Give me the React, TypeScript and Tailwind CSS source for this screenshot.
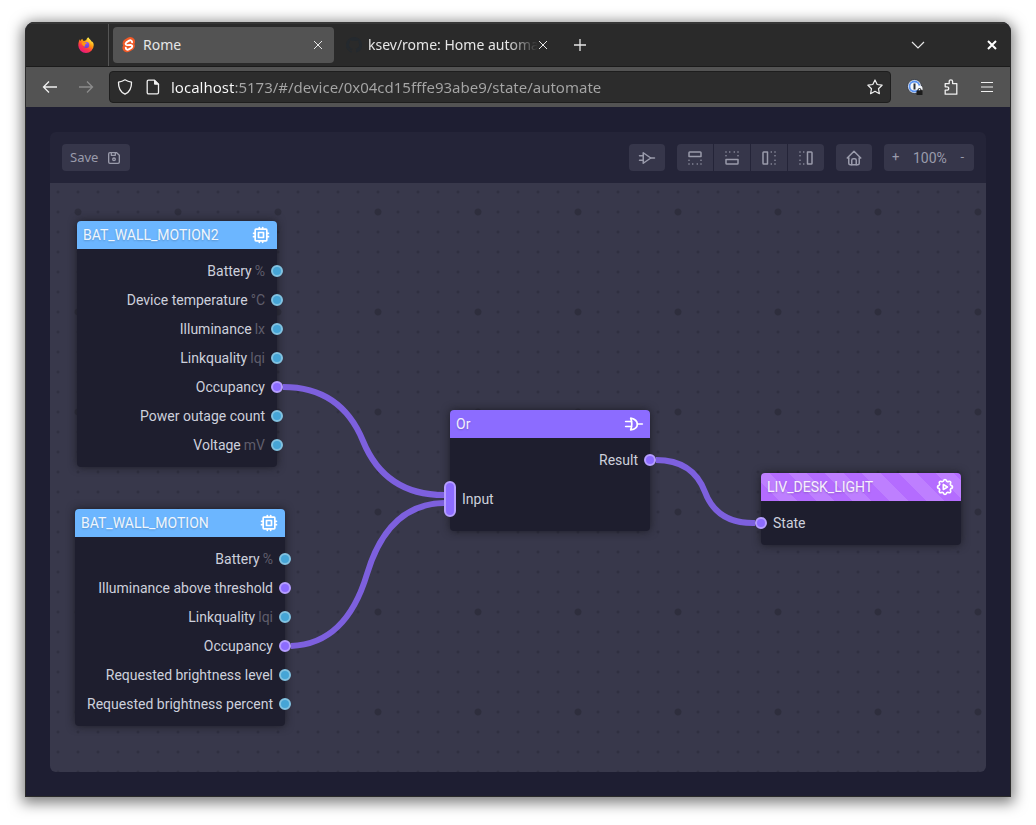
import type { ReactNode } from "react";
import {
  TbBoxAlignBottom,
  TbBoxAlignLeft,
  TbBoxAlignRight,
  TbBoxAlignTop,
  TbCpu,
  TbDeviceFloppy,
  TbHome,
  TbLogicBuffer,
  TbLogicOr,
  TbSettingsAutomation,
} from "react-icons/tb";

type PortKind = "value" | "flag";

interface Port {
  label: string;
  unit?: string;
  kind: PortKind;
  side: "in" | "out";
  multi?: boolean;
}

interface NodeProps {
  title: string;
  icon: ReactNode;
  place: string;
  header: string;
  ports: Port[];
}

const out = (label: string, kind: PortKind, unit?: string): Port => ({ label, kind, unit, side: "out" });

const motion2: Port[] = [
  out("Battery", "value", "%"),
  out("Device temperature", "value", "°C"),
  out("Illuminance", "value", "lx"),
  out("Linkquality", "value", "lqi"),
  out("Occupancy", "flag"),
  out("Power outage count", "value"),
  out("Voltage", "value", "mV"),
];

const motion: Port[] = [
  out("Battery", "value", "%"),
  out("Illuminance above threshold", "flag"),
  out("Linkquality", "value", "lqi"),
  out("Occupancy", "flag"),
  out("Requested brightness level", "value"),
  out("Requested brightness percent", "value"),
];

const orPorts: Port[] = [
  out("Result", "flag"),
  { label: "Input", kind: "flag", side: "in", multi: true },
];

const lightPorts: Port[] = [{ label: "State", kind: "flag", side: "in" }];

function Handle({ port }: { port: Port }) {
  const color =
    port.kind === "flag" ? "bg-[#8c6cff] border-[#b59eff]" : "bg-[#46a5d6] border-[#82c2e0]";
  const side = port.side === "out" ? "-right-[6px]" : "-left-[6px]";
  const height = port.multi ? "h-9" : "h-3";
  return (
    <button
      aria-label={port.label}
      className={`absolute top-1/2 w-3 -translate-y-1/2 rounded-full border-2 ${height} ${side} ${color}`}
    />
  );
}

function GraphNode({ title, icon, place, header, ports }: NodeProps) {
  return (
    <section className={`absolute rounded bg-[#1e1e2e] shadow-[0_0_8px_rgba(20,20,25,0.75)] ${place}`}>
      <header
        className={`flex h-7 items-center justify-between rounded-t px-1.5 text-sm text-white/90 ${header}`}
      >
        <h2 className="text-shadow-[0_1px_2px_rgba(0,0,0,0.2)]">{title}</h2>
        <span className="text-xl text-white">{icon}</span>
      </header>
      <ul className="flex flex-col gap-px py-2 text-sm text-[#cdd0dc]">
        {ports.map((port) => (
          <li
            key={port.label}
            className={`relative flex items-center gap-[3px] px-3 ${port.multi ? "h-12" : "h-7"} ${
              port.side === "out" ? "justify-end" : "justify-start"
            }`}
          >
            <span>{port.label}</span>
            {port.unit && <span className="text-[#5f5d6b]">{port.unit}</span>}
            <Handle port={port} />
          </li>
        ))}
      </ul>
    </section>
  );
}

function FirefoxLogo() {
  return (
    <svg viewBox="0 0 16 16" className="size-4">
      <defs>
        <linearGradient id="fx" x1="0.8" y1="0.1" x2="0.25" y2="1">
          <stop offset="0" stopColor="#fff44f" />
          <stop offset="0.35" stopColor="#ff980e" />
          <stop offset="0.65" stopColor="#ff3647" />
          <stop offset="1" stopColor="#e31587" />
        </linearGradient>
        <linearGradient id="fy" x1="0" y1="0" x2="0" y2="1">
          <stop offset="0" stopColor="#9059ff" />
          <stop offset="1" stopColor="#6a3fd0" />
        </linearGradient>
      </defs>
      <path
        fill="url(#fx)"
        d="M15.4 6.2c-.4-1-1.2-1.9-1.9-2.3.3.6.5 1.1.6 1.6C13 2.800 11.200 2 10.300.2c-1.400.8-1.900 2-2 3.100-.8 0-1.600.3-2.300.7-.8-.3-1.500-1.200-1.700-2.300-.9.6-1.500 1.500-1.900 2.400-.3-.4-.3-1.600-.3-1.800C1.200 3 .3 5.500.300 8.300a7.700 7.700 0 0 0 15.400 0c0-.7-.1-1.400-.3-2.100z"
      />
      <circle cx="8.300" cy="8" r="3" fill="url(#fy)" />
      <path
        fill="#ff980e"
        d="M3.600 5.600c1.200-.8 2.500-.8 3.300 0 .8.1 1.500.1 1.900.4-.2.8-1.200 1.100-1.800 1.400-.3.800-.1 1.500.4 1.900-1.700.5-3.500-1.100-3.800-3.700z"
      />
    </svg>
  );
}

function SvelteLogo() {
  return (
    <svg viewBox="0 0 16 16" className="size-4">
      <path
        fill="#f05a28"
        d="M13.200 2.100C11.700 0 8.800-.6 6.700.700L3.400 2.800A4.200 4.200 0 0 0 1.700 5.700c-.2.900 0 1.900.4 2.700-.3.500-.5 1-.6 1.500-.2 1.100 0 2.300.7 3.300 1.500 2.100 4.400 2.700 6.500 1.400l3.400-2.200a4.200 4.200 0 0 0 1.700-2.800c.2-.9 0-1.900-.4-2.700.3-.5.5-1 .6-1.500.2-1.200 0-2.400-.8-3.300z"
      />
      <path
        fill="none"
        stroke="#fff"
        strokeWidth="1.900"
        strokeLinecap="round"
        strokeLinejoin="round"
        d="M11.100 5.200c0-1.700-1.600-2.300-2.900-1.600L5.400 5.400c-1.500 1.200-.7 2.900.9 2.700l3.300-.2c1.600 0 2.300 1.700.900 2.800l-2.800 1.700c-1.500.8-3 0-2.900-1.600"
      />
    </svg>
  );
}

const line = "fill-none stroke-current";

function Close({ className }: { className: string }) {
  return (
    <svg viewBox="0 0 10 10" className={`${line} ${className}`}>
      <path d="M1 1l8 8M9 1L1 9" />
    </svg>
  );
}

function TabStrip() {
  return (
    <div className="flex h-[45px] items-center border-b border-[#1b1b1b] bg-[#2a2a2a] pt-[2px] text-sm text-[#e6e6e6] shadow-[inset_0_2px_0_#373737]">
      <button aria-label="Pinned tab" className="flex w-[82px] items-center justify-end pr-[14px]">
        <FirefoxLogo />
      </button>
      <div className="h-[42px] w-px self-end bg-[#555]" />
      <div className="ml-1 flex h-9 w-[221px] items-center rounded bg-[#535353] pr-[11px] pl-2">
        <SvelteLogo />
        <span className="ml-1.5 flex-1">Rome</span>
        <button aria-label="Close tab">
          <Close className="size-[10px]" />
        </button>
      </div>
      <div className="flex h-9 w-[214px] items-center pl-3">
        <svg viewBox="0 0 16 16" className="size-4 shrink-0 fill-[#24292e]">
          <path d="M8 0a8 8 0 0 0-2.500 15.600c.4.100.5-.2.500-.4v-1.500c-2 .4-2.500-.5-2.700-.9-.1-.3-.5-1-.8-1.200-.3-.1-.700-.5 0-.5.600 0 1.100.6 1.200.8.700 1.200 1.900.9 2.400.700 0-.5.200-.9.500-1.100-1.800-.2-3.600-.9-3.600-4 0-.9.300-1.600.8-2.100 0-.200-.3-1 .1-2.100 0 0 .7-.2 2.200.8a7.500 7.500 0 0 1 4 0c1.500-1 2.200-.8 2.200-.8.400 1.100.1 1.900.1 2.100.5.500.8 1.200.8 2.100 0 3.100-1.900 3.800-3.700 4 .3.200.6.700.6 1.500v2.200c0 .2.100.5.500.4A8 8 0 0 0 8 0z" />
        </svg>
        <span className="ml-1.5 w-[170px] whitespace-nowrap [mask-image:linear-gradient(to_right,#000_82%,transparent)]">
          ksev/rome: Home automa
        </span>
        <button aria-label="Close tab" className="shrink-0">
          <Close className="size-[10px]" />
        </button>
      </div>
      <button aria-label="New tab" className="ml-[25px]">
        <svg viewBox="0 0 14 14" className={`size-[14px] ${line}`}>
          <path strokeWidth="1.300" d="M7 1v12M1 7h12" />
        </svg>
      </button>
      <button aria-label="List all tabs" className="ml-auto">
        <svg viewBox="0 0 14 14" className={`size-[14px] ${line}`}>
          <path strokeWidth="1.200" d="M1 4l6 6 6-6" />
        </svg>
      </button>
      <button aria-label="Close window" className="mr-[13px] ml-[62px] text-white">
        <Close className="size-[10px] stroke-2" />
      </button>
    </div>
  );
}

function AddressBar() {
  return (
    <div className="flex h-10 items-center bg-[#535353] text-[#f0f0f0]">
      <div className="flex w-[83px] items-center gap-5 pl-4">
        <button aria-label="Back">
          <svg viewBox="0 0 16 16" className={`size-4 ${line}`}>
            <path strokeWidth="1.300" d="M15 8H1.500M7 2.500L1.500 8 7 13.500" />
          </svg>
        </button>
        <button aria-label="Forward" className="text-[#8c8c8c]">
          <svg viewBox="0 0 16 16" className={`size-4 ${line}`}>
            <path strokeWidth="1.300" d="M1 8h13.500M9 2.500L14.500 8 9 13.500" />
          </svg>
        </button>
      </div>
      <div className="flex h-8 flex-1 items-center rounded border border-[#1e1e1e] bg-[#2c2c2c] px-[7px]">
        <svg viewBox="0 0 16 16" className={`size-4 ${line}`}>
          <path
            strokeWidth="1.300"
            strokeLinejoin="round"
            d="M8 .8c2 1.300 4 2 6.500 2.400.2 5.300-1.500 9.600-6.500 12C3 12.800 1.300 8.500 1.500 3.200 4 2.800 6 2.100 8 .8z"
          />
        </svg>
        <svg viewBox="0 0 16 16" className={`ml-3 size-4 ${line}`}>
          <path
            strokeWidth="1.300"
            strokeLinejoin="round"
            d="M3.500 1.200h6l4 4v8.300a1.300 1.300 0 0 1-1.300 1.300H3.500a1.300 1.300 0 0 1-1.300-1.300v-11a1.300 1.300 0 0 1 1.300-1.300z"
          />
          <path fill="currentColor" d="M9.500 1.200v4h4z" />
        </svg>
        <input
          aria-label="Address"
          defaultValue="localhost:5173/#/device/0x04cd15fffe93abe9/state/automate"
          className="ml-[10px] min-w-0 flex-1 bg-[linear-gradient(to_right,#fbfbfb_63px,#a6a6a6_63px)] bg-clip-text text-[15px] text-transparent outline-none"
        />
        <button aria-label="Bookmark">
          <svg viewBox="0 0 16 16" className={`size-4 ${line}`}>
            <path
              strokeWidth="1.200"
              strokeLinejoin="round"
              d="M8 1l2.200 4.500 4.900.7-3.600 3.500.9 5L8 12.300l-4.400 2.400.9-5L.9 6.200l4.900-.7z"
            />
          </svg>
        </button>
      </div>
      <div className="flex items-center gap-5 pr-[15px] pl-4">
        <button aria-label="Password manager">
          <svg viewBox="0 0 16 16" className="size-4">
            <circle cx="7.500" cy="7.500" r="7" fill="#f4f6fa" stroke="#353a44" />
            <circle cx="7.500" cy="7.500" r="5" fill="none" stroke="#5b93f0" strokeWidth="1.800" />
            <path d="M7.500 4.500v6" stroke="#2d3138" strokeWidth="2" />
            <path d="M9.500 9.500a3 3 0 0 1 6 0V11H9.500z" fill="#f4f6fa" />
            <rect x="9.500" y="11.500" width="6" height="4.500" rx="0.600" fill="#1c1c1c" />
            <path d="M11 12v-1a1.500 1.500 0 0 1 3 0v1" fill="none" stroke="#1c1c1c" />
          </svg>
        </button>
        <button aria-label="Extensions">
          <svg viewBox="0 0 16 16" className={`size-4 ${line}`}>
            <path
              strokeWidth="1.300"
              strokeLinejoin="round"
              d="M2.200 4.600h4V2.500a1.700 1.700 0 0 1 3.400 0v2.100h4.200v10.600H2.200v-4h1.800a1.700 1.700 0 0 0 0-3.400H2.200z"
            />
          </svg>
        </button>
        <button aria-label="Menu">
          <svg viewBox="0 0 16 16" className={`size-4 ${line}`}>
            <path strokeWidth="1.200" d="M2 3.500h12M2 8h12M2 12.500h12" />
          </svg>
        </button>
      </div>
    </div>
  );
}

const tool = "flex h-[27px] w-9 items-center justify-center bg-[#36364a] text-[18px] text-[#9a9bab]";

function Toolbar() {
  return (
    <div className="flex items-center gap-3 bg-[#242438] p-3 text-[#9a9bab]">
      <button className="mr-auto flex h-[27px] items-center gap-2 rounded bg-[#36364a] px-2 font-['Noto_Sans',sans-serif] text-[13px]">
        Save
        <TbDeviceFloppy className="size-4" />
      </button>
      <button aria-label="Add logic" className={`${tool} rounded`}>
        <TbLogicBuffer />
      </button>
      <div className="flex gap-px">
        <button aria-label="Align top" className={`${tool} rounded-l`}>
          <TbBoxAlignTop />
        </button>
        <button aria-label="Align bottom" className={tool}>
          <TbBoxAlignBottom />
        </button>
        <button aria-label="Align left" className={tool}>
          <TbBoxAlignLeft />
        </button>
        <button aria-label="Align right" className={`${tool} rounded-r`}>
          <TbBoxAlignRight />
        </button>
      </div>
      <button aria-label="Reset view" className={`${tool} rounded`}>
        <TbHome />
      </button>
      <div className="flex h-[27px] w-[90px] items-center justify-between rounded bg-[#36364a] px-2 text-sm">
        <button aria-label="Zoom in" className="text-[13px]">+</button>
        <span>100%</span>
        <button aria-label="Zoom out" className="pr-0.5 text-[13px]">-</button>
      </div>
    </div>
  );
}

export default function App() {
  return (
    <div className="flex min-h-screen flex-col bg-white px-[25px] pt-[22px] pb-7 font-['Noto_Sans',sans-serif]">
      <div className="flex flex-1 flex-col overflow-hidden rounded-t-[9px] border border-t-0 border-[#2b2b2b] bg-[#1e1e32] shadow-[0_3px_14px_3px_rgba(0,0,0,0.5)]">
        <TabStrip />
        <AddressBar />
        <main className="flex flex-1 flex-col p-6 pt-[25px] font-[Roboto,sans-serif]">
          <div className="flex flex-1 flex-col overflow-hidden rounded-md">
            <Toolbar />
            <div className="relative flex-1 overflow-hidden bg-[#38384b] bg-[radial-gradient(circle,#2e2e3d_3px,transparent_4px),radial-gradient(circle,#303041_1px,transparent_2px)] bg-[length:100px_100px,20px_20px] bg-[position:-22px_-21px,-2px_-1px]">
              <svg
                className="pointer-events-none absolute inset-0 z-10 size-full fill-none stroke-[#7d60de]"
                strokeWidth="6"
              >
                <path d="M233 204Q291 204 313 258T394 312" />
                <path d="M241 463Q296 461 317 391T394 320" />
                <path d="M606 277Q643 277 655 309T705 340" />
              </svg>
              <GraphNode
                title="BAT_WALL_MOTION2"
                icon={<TbCpu />}
                place="left-[27px] top-[38px] w-[200px]"
                header="bg-[#6cb6ff]"
                ports={motion2}
              />
              <GraphNode
                title="BAT_WALL_MOTION"
                icon={<TbCpu />}
                place="left-[25px] top-[326px] w-[210px]"
                header="bg-[#6cb6ff]"
                ports={motion}
              />
              <GraphNode
                title="Or"
                icon={<TbLogicOr />}
                place="left-[400px] top-[227px] w-[200px]"
                header="bg-[#8c6cff]"
                ports={orPorts}
              />
              <GraphNode
                title="LIV_DESK_LIGHT"
                icon={<TbSettingsAutomation />}
                place="left-[711px] top-[290px] w-[200px]"
                header="bg-[repeating-linear-gradient(45deg,#b46cff_0px,#b46cff_13px,#be7fff_13px,#be7fff_26px)]"
                ports={lightPorts}
              />
            </div>
          </div>
        </main>
      </div>
    </div>
  );
}
